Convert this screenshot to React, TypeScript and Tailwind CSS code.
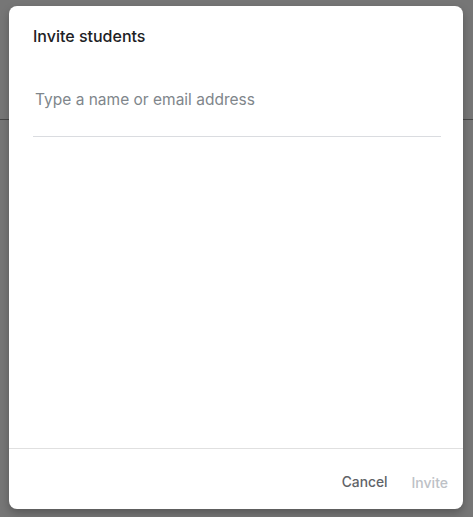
import React from "react";

export default function App() {
  return (
    <div
      className="relative w-[473px] h-[517px] bg-[#767676] overflow-hidden"
      style={{ fontFamily: "Inter, Roboto, sans-serif" }}
    >
      <div className="absolute left-0 right-0 top-[119px] h-px bg-[#474747]" />
      <div className="absolute left-[9px] top-[6px] w-[454px] h-[503px] bg-white rounded-[8px] shadow-[0_4px_8px_rgba(0,0,0,0.25)] flex flex-col">
        <div className="px-[24px] pt-[18px] flex-1">
          <div className="text-[16px] leading-[24px] font-medium text-[#202124]">
            Invite students
          </div>
          <div className="mt-[40px] pb-[24px] border-b border-[#dadce0] mr-[-2px] pl-[2px]">
            <div className="text-[15.5px] leading-[24px] text-[#80868b]">
              Type a name or email address
            </div>
          </div>
        </div>
        <div className="border-t border-[#e0e0e0] flex justify-end gap-[8px] pt-[15px] pb-[9px] pr-[7px]">
          <button className="h-[36px] px-[8px] text-[13.8px] font-medium text-[#5f6368]">
            Cancel
          </button>
          <button className="h-[36px] px-[8px] text-[14px] font-medium text-[#bdc1c6]">
            Invite
          </button>
        </div>
      </div>
    </div>
  );
}
